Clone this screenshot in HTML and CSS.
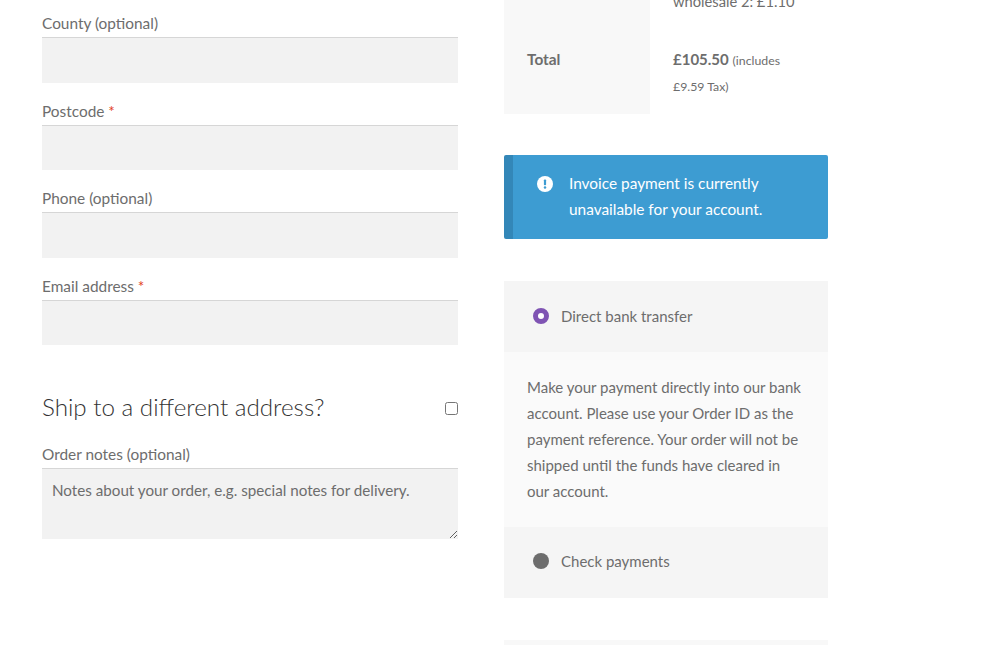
FILE: index.html
```html
<!DOCTYPE html>
<html lang="en">
<head>
  <meta charset="UTF-8">
  <meta name="viewport" content="width=device-width, initial-scale=1.0">
  <title>Checkout</title>
  <link rel="stylesheet" href="styles.css">
</head>
<body>

<div class="checkout">
  <!-- Billing details -->
  <form class="billing">
    <div class="form-row">
      <label>County (optional)</label>
      <input type="text" class="field">
    </div>
    <div class="form-row">
      <label>Postcode <span class="required">*</span></label>
      <input type="text" class="field">
    </div>
    <div class="form-row">
      <label>Phone (optional)</label>
      <input type="text" class="field">
    </div>
    <div class="form-row">
      <label>Email address <span class="required">*</span></label>
      <input type="text" class="field">
    </div>

    <div class="ship-heading">
      <h3>Ship to a different address?</h3>
      <input type="checkbox" class="ship-check">
    </div>

    <div class="form-row">
      <label>Order notes (optional)</label>
      <textarea class="field notes" placeholder="Notes about your order, e.g. special notes for delivery."></textarea>
    </div>
  </form>

  <!-- Order review -->
  <div class="review">
    <table class="totals">
      <tr>
        <th></th>
        <td>wholesale 2: £1.10</td>
      </tr>
      <tr>
        <th>Total</th>
        <td><strong>£105.50</strong> <small>(includes £9.59 Tax)</small></td>
      </tr>
    </table>

    <div class="notice">
      <svg class="notice-icon" viewBox="0 0 16 16" width="16" height="16">
        <circle cx="8" cy="8" r="8" fill="#fff"/>
        <rect x="6.9" y="3.4" width="2.2" height="5.8" rx="0.8" fill="#3d9cd2"/>
        <circle cx="8" cy="11.4" r="1.25" fill="#3d9cd2"/>
      </svg>
      <p>Invoice payment is currently unavailable for your account.</p>
    </div>

    <div class="payment">
      <div class="method">
        <span class="radio checked"></span>
        <span>Direct bank transfer</span>
      </div>
      <div class="method-box">
        Make your payment directly into our bank account. Please use your Order ID as the payment reference. Your order will not be shipped until the funds have cleared in our account.
      </div>
      <div class="method">
        <span class="radio"></span>
        <span>Check payments</span>
      </div>
    </div>

    <div class="next-box"></div>
  </div>
</div>

</body>
</html>
```

FILE: styles.css
```css
* {
  box-sizing: border-box;
}

html, body {
  height: 645px;
  overflow: hidden;
}

body {
  font-family: 'Lato', 'Open Sans', sans-serif;
  font-size: 15.4px;
  line-height: 26px;
  color: #6d6d6d;
  background-color: #ffffff;
  margin: 0;
  padding: 0;
}

.checkout {
  display: flex;
  gap: 46px;
  padding: 0 42px;
}

.billing {
  width: 416px;
  padding-top: 11px;
}

.form-row {
  margin-bottom: 16px;
}

.form-row label {
  display: block;
  height: 26px;
  line-height: 24px;
}

.required {
  color: #e2401c;
}

.field {
  display: block;
  width: 100%;
  height: 45.5px;
  padding: 10px;
  border: none;
  border-top: 1px solid #d6d6d6;
  border-radius: 0;
  background-color: #f2f2f2;
  font: inherit;
  color: #6d6d6d;
}

.notes {
  height: 71px;
  font-size: 15.2px;
  line-height: 26px;
  padding-top: 8px;
}

.notes::placeholder {
  color: #6d6d6d;
  opacity: 1;
}

.ship-heading {
  display: flex;
  align-items: center;
  justify-content: space-between;
  margin-top: 42px;
  margin-bottom: 15px;
  height: 40px;
}

.ship-heading h3 {
  margin: 0;
  font-size: 24.2px;
  font-weight: 300;
  color: #333333;
}

.ship-check {
  width: 13px;
  height: 13px;
  margin: 2px 0 0;
}

.review {
  width: 324px;
  margin-top: -28px;
}

.totals {
  width: 100%;
  border-collapse: collapse;
  margin-bottom: 41px;
}

.totals th {
  width: 146px;
  padding: 16px 23px;
  background-color: #f8f8f8;
  text-align: left;
  vertical-align: top;
  font-weight: 700;
}

.totals td {
  padding: 16px 23px;
  font-size: 14.7px;
  vertical-align: top;
}

.totals strong {
  font-size: 15px;
}

.totals small {
  font-size: 12.3px;
  line-height: 1;
}

.notice {
  display: flex;
  align-items: flex-start;
  gap: 16px;
  height: 84px;
  padding: 15px 40px 15px 24px;
  background-color: #3d9cd2;
  border-left: 9px solid #3387b8;
  border-radius: 2px;
  color: #ffffff;
  margin-bottom: 42px;
}

.notice-icon {
  flex: none;
  margin-top: 6px;
}

.notice p {
  margin: 0;
}

.payment {
  margin-bottom: 42px;
  font-size: 15px;
}

.method {
  display: flex;
  align-items: center;
  gap: 12px;
  height: 71px;
  padding: 0 0 2px 29px;
  background-color: #f5f5f5;
}

.method-box + .method {
  padding-bottom: 4px;
}

.radio {
  flex: none;
  width: 16px;
  height: 16px;
  border-radius: 50%;
  background-color: #6d6d6d;
}

.radio.checked {
  background-color: #ffffff;
  border: 5px solid #7f54b3;
}

.method-box {
  height: 175px;
  padding: 22px 23px 0;
  background-color: #fafafa;
}

.next-box {
  height: 5px;
  background-color: #f8f8f8;
}
```
